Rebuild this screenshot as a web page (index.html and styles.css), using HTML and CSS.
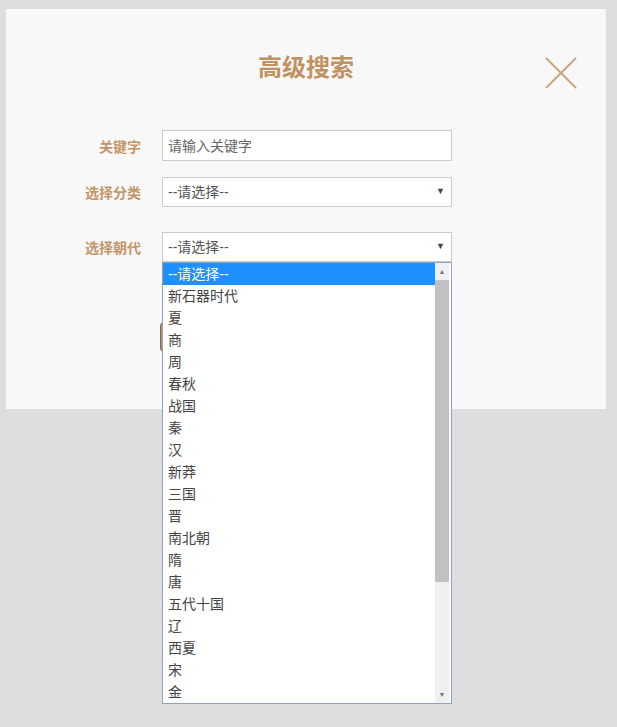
FILE: index.html
```html
<!DOCTYPE html>
<html lang="zh-CN">
<head>
    <meta charset="UTF-8">
    <meta name="viewport" content="width=device-width, initial-scale=1.0">
    <title>高级搜索</title>
    <link rel="stylesheet" href="styles.css">
</head>
<body>

    <div class="search-modal">
        <div class="modal-header">
            <h2 class="modal-title">高级搜索</h2>
            <button class="close-btn" aria-label="关闭">
                <svg width="32" height="32" viewBox="0 0 32 32">
                    <line x1="1" y1="1" x2="31" y2="31" />
                    <line x1="31" y1="1" x2="1" y2="31" />
                </svg>
            </button>
        </div>

        <div class="form-row row-keyword">
            <label class="form-label">关键字</label>
            <input class="form-input" type="text" placeholder="请输入关键字">
        </div>

        <div class="form-row row-category">
            <label class="form-label">选择分类</label>
            <div class="select-box">
                <select class="form-select">
                    <option>--请选择--</option>
                </select>
            </div>
        </div>

        <div class="form-row row-dynasty">
            <label class="form-label">选择朝代</label>
            <div class="select-box">
                <select class="form-select">
                    <option>--请选择--</option>
                </select>

                <!-- opened dropdown of the dynasty select -->
                <div class="dropdown">
                    <div class="dropdown-options">
                        <div class="option selected">--请选择--</div>
                        <div class="option">新石器时代</div>
                        <div class="option">夏</div>
                        <div class="option">商</div>
                        <div class="option">周</div>
                        <div class="option">春秋</div>
                        <div class="option">战国</div>
                        <div class="option">秦</div>
                        <div class="option">汉</div>
                        <div class="option">新莽</div>
                        <div class="option">三国</div>
                        <div class="option">晋</div>
                        <div class="option">南北朝</div>
                        <div class="option">隋</div>
                        <div class="option">唐</div>
                        <div class="option">五代十国</div>
                        <div class="option">辽</div>
                        <div class="option">西夏</div>
                        <div class="option">宋</div>
                        <div class="option">金</div>
                    </div>
                    <div class="scrollbar">
                        <div class="scroll-arrow">▲</div>
                        <div class="scroll-thumb"></div>
                        <div class="scroll-track"></div>
                        <div class="scroll-arrow">▼</div>
                    </div>
                </div>
            </div>
        </div>

        <div class="form-row row-submit">
            <span class="form-label"></span>
            <button class="search-btn">搜索</button>
        </div>
    </div>

</body>
</html>
```

FILE: styles.css
```css
/* General Styling */
html {
    height: 100%;
}

body {
    margin: 0;
    min-height: 100%;
    box-sizing: border-box;
    padding: 9px 0 0 6px;
    background-color: #dedede;
    font-family: "Liberation Sans", "Noto Sans CJK SC", sans-serif;
    font-size: 14px;
    color: #444;
}

.search-modal {
    position: relative;
    width: 600px;
    height: 400px;
    background: #f8f8f8;
    box-sizing: border-box;
}

.modal-header {
    position: relative;
    padding-top: 42px;
    margin-bottom: 45px;
}

.modal-title {
    margin: 0;
    text-align: center;
    font-size: 24px;
    line-height: 34px;
    font-weight: bold;
    color: #c09262;
}

.close-btn {
    position: absolute;
    top: 48px;
    right: 29px;
    width: 32px;
    height: 32px;
    padding: 0;
    border: none;
    background: none;
    cursor: pointer;
}

.close-btn line {
    stroke: #c9a67f;
    stroke-width: 2;
}

/* Form rows */
.form-row {
    display: flex;
    align-items: center;
}

.row-keyword {
    margin-bottom: 16px;
}

.row-category {
    margin-bottom: 25px;
}

.row-submit {
    margin-top: 60px;
}

.form-label {
    width: 135px;
    margin-right: 21px;
    text-align: right;
    font-weight: bold;
    font-size: 14px;
    color: #c39668;
}

.form-input,
.form-select {
    width: 290px;
    height: 31px;
    box-sizing: border-box;
    padding: 0 5px;
    border: 1px solid #cccccc;
    background: #ffffff;
    font-family: inherit;
    font-size: 14px;
    color: #555;
    outline: none;
}

.form-input::placeholder {
    color: #666;
}

.form-select {
    height: 30px;
    appearance: none;
    -webkit-appearance: none;
    border-radius: 0;
}

.select-box {
    position: relative;
    width: 290px;
}

.select-box::after {
    content: "▼";
    position: absolute;
    right: 7px;
    top: 9px;
    font-size: 9px;
    color: #444;
    pointer-events: none;
}

/* Opened dropdown list */
.dropdown {
    position: absolute;
    top: 30px;
    left: 0;
    z-index: 10;
    display: flex;
    width: 290px;
    box-sizing: border-box;
    border: 1px solid #8ba2c0;
    background: #ffffff;
}

.dropdown-options {
    flex: 1;
}

.option {
    height: 22px;
    line-height: 22px;
    padding-left: 5px;
    font-size: 14px;
    color: #444;
}

.option.selected {
    background: #1e90ff;
    color: #ffffff;
}

.scrollbar {
    display: flex;
    flex-direction: column;
    width: 14px;
    margin-right: 2px;
    background: #f0f0f0;
}

.scroll-arrow {
    height: 17px;
    line-height: 17px;
    text-align: center;
    font-size: 7px;
    color: #777;
}

.scroll-thumb {
    height: 302px;
    background: #c1c1c1;
}

.scroll-track {
    flex: 1;
}

/* Button under the dropdown */
.search-btn {
    width: 120px;
    height: 30px;
    margin-left: -2px;
    border: 1px solid #7a6a58;
    border-radius: 4px;
    background: #c09262;
    color: #ffffff;
    font-family: inherit;
    font-size: 14px;
}
```
